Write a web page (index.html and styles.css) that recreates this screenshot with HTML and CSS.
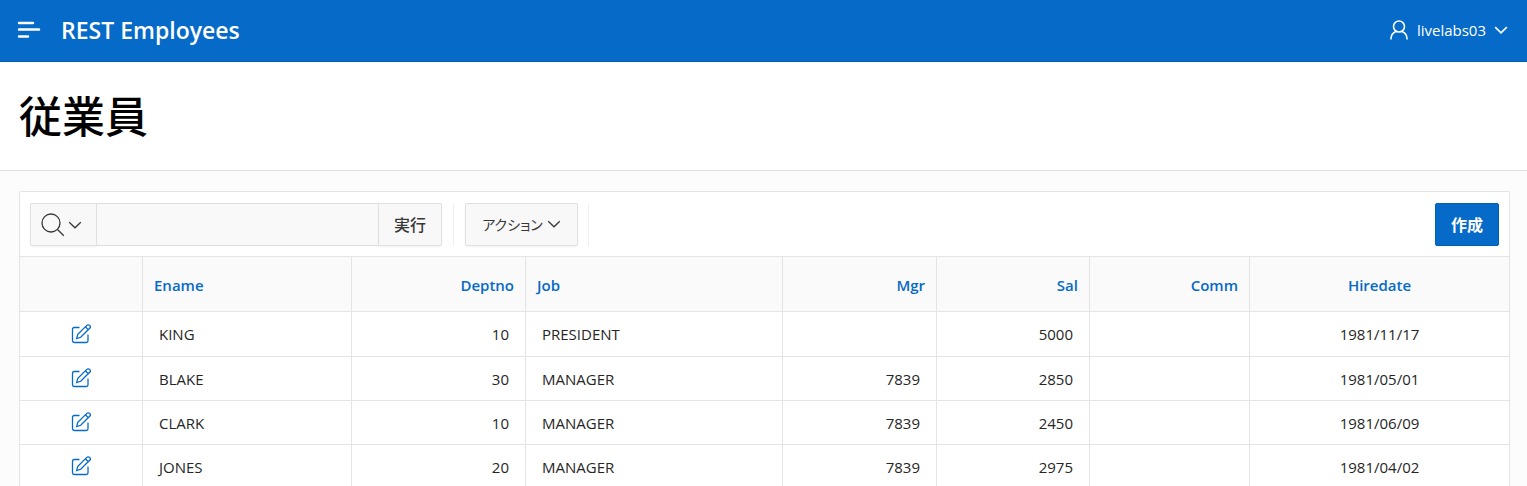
FILE: index.html
```html
<!DOCTYPE html>
<html lang="ja">
<head>
<meta charset="utf-8">
<meta name="viewport" content="width=device-width, initial-scale=1">
<title>従業員</title>
<link rel="stylesheet" href="styles.css">
</head>
<body>
<svg class="sprite" aria-hidden="true">
  <symbol id="chevron" viewBox="0 0 14 14"><path d="M1.2 4.2 7 9.800l5.800-5.600"/></symbol>
  <symbol id="edit" viewBox="0 0 20 20"><path d="M8.500 3.500H3.200A1.700 1.700 0 0 0 1.500 5.200v11.600a1.700 1.700 0 0 0 1.700 1.700h12.100a1.700 1.700 0 0 0 1.700-1.700v-6.300M5.600 14.600l1.200-4.200 9-9a1.900 1.900 0 0 1 2.900 2.900l-9 9-4.100 1.300ZM14.400 2.800l2.900 2.900"/></symbol>
</svg>
<header class="header">
  <button class="menu" type="button" aria-label="ナビゲーション">
    <svg viewBox="0 0 24 18"><path d="M2 2h14M2 8.500h20M2 15.500h9"/></svg>
  </button>
  <a class="brand" href="#">REST Employees</a>
  <button class="user" type="button">
    <svg class="person" viewBox="0 0 20 20"><circle cx="10" cy="6.500" r="5.500"/><path d="M1.900 19.500c0-4.300 2-6.900 5.400-8.200M18.100 19.500c0-4.300-2-6.900-5.400-8.200"/></svg>
    <span>livelabs03</span>
    <svg class="chevron"><use href="#chevron"/></svg>
  </button>
</header>
<div class="title"><h1>従業員</h1></div>
<main class="content">
  <section class="report">
    <div class="toolbar">
      <form class="search">
        <button class="button search-column" type="button" aria-label="検索する列の選択">
          <svg class="magnifier" viewBox="0 0 24 24"><circle cx="10" cy="10" r="9"/><path d="m16.500 16.500 6.300 6.300"/></svg>
          <svg class="chevron"><use href="#chevron"/></svg>
        </button>
        <input class="search-text" type="text" aria-label="検索">
        <button class="button go" type="button">実行</button>
      </form>
      <div class="actions">
        <button class="button action" type="button"><span>アクション</span><svg class="chevron"><use href="#chevron"/></svg></button>
      </div>
      <button class="button create" type="button">作成</button>
    </div>
    <table class="grid">
      <colgroup><col class="c-edit"><col class="c-ename"><col class="c-deptno"><col class="c-job"><col class="c-mgr"><col class="c-sal"><col class="c-comm"><col class="c-hire"></colgroup>
      <thead>
        <tr><th></th><th><a href="#">Ename</a></th><th class="num"><a href="#">Deptno</a></th><th><a href="#">Job</a></th><th class="num"><a href="#">Mgr</a></th><th class="num"><a href="#">Sal</a></th><th class="num"><a href="#">Comm</a></th><th class="mid"><a href="#">Hiredate</a></th></tr>
      </thead>
      <tbody>
        <tr><td class="mid"><a href="#" aria-label="KINGを編集"><svg class="edit"><use href="#edit"/></svg></a></td><td>KING</td><td class="num">10</td><td>PRESIDENT</td><td class="num"></td><td class="num">5000</td><td class="num"></td><td class="mid">1981/11/17</td></tr>
        <tr><td class="mid"><a href="#" aria-label="BLAKEを編集"><svg class="edit"><use href="#edit"/></svg></a></td><td>BLAKE</td><td class="num">30</td><td>MANAGER</td><td class="num">7839</td><td class="num">2850</td><td class="num"></td><td class="mid">1981/05/01</td></tr>
        <tr><td class="mid"><a href="#" aria-label="CLARKを編集"><svg class="edit"><use href="#edit"/></svg></a></td><td>CLARK</td><td class="num">10</td><td>MANAGER</td><td class="num">7839</td><td class="num">2450</td><td class="num"></td><td class="mid">1981/06/09</td></tr>
        <tr><td class="mid"><a href="#" aria-label="JONESを編集"><svg class="edit"><use href="#edit"/></svg></a></td><td>JONES</td><td class="num">20</td><td>MANAGER</td><td class="num">7839</td><td class="num">2975</td><td class="num"></td><td class="mid">1981/04/02</td></tr>
      </tbody>
    </table>
  </section>
</main>
</body>
</html>
```
FILE: styles.css
```css
* { box-sizing: border-box; }
html { scrollbar-width: none; }
body {
  margin: 0;
  background: #fcfcfc;
  color: #262626;
  font: 15px/20px "Open Sans", "Noto Sans CJK JP", sans-serif;
}
button, input { font: inherit; color: inherit; margin: 0; }
a { color: #056ac8; text-decoration: none; }
svg { display: block; flex: none; fill: none; stroke: currentColor; }
.sprite { display: none; }
.chevron { width: 14px; height: 14px; stroke-width: 1.3; }

.header {
  display: flex;
  align-items: center;
  height: 62px;
  padding: 0 19px 2px 17px;
  background: #056ac8;
  border-bottom: 1px solid #045fb4;
  color: #fff;
}
.menu, .user { border: 0; padding: 0; background: none; }
.menu svg { width: 24px; height: 18px; stroke-width: 2.5; stroke-linecap: round; }
.brand { margin-left: 20px; color: #fff; font-size: 23px; line-height: 32px; font-weight: 600; }
.user { display: flex; align-items: center; gap: 8px; margin-left: auto; }
.person { width: 20px; height: 20px; stroke-width: 1.6; }
.user .chevron { stroke-width: 1.6; }

.title {
  padding: 22px 19px 26px;
  background: #fff;
  border-bottom: 1px solid #e2e2e2;
}
.title h1 { margin: 0; color: #000; font-size: 43px; line-height: 60px; font-weight: 500; font-family: "Noto Sans CJK JP", sans-serif; }

.content { padding: 20px 17px 0 19px; }
.report { background: #fff; border: 1px solid #e4e4e4; border-bottom: 0; border-radius: 2px 2px 0 0; }
.toolbar { display: flex; align-items: center; padding: 11px 10px 10px; }
.button {
  display: flex;
  align-items: center;
  justify-content: center;
  height: 43px;
  padding: 0 8px 2px;
  border: 1px solid #e0e0e0;
  border-radius: 2px;
  background: #f8f8f8;
  color: #383838;
  font-family: "Noto Sans CJK JP", sans-serif;
  font-size: 16px;
  white-space: nowrap;
  box-shadow: 0 1px 2px rgba(0, 0, 0, .05);
}
.search { display: flex; }
.search-column { gap: 3px; width: 67px; padding: 0 4px 0 0; border-radius: 2px 0 0 2px; }
.magnifier { width: 24px; height: 24px; stroke-width: 1.3; }
.search-text { width: 281px; height: 43px; padding: 0 12px; border: 1px solid #dedede; border-width: 1px 0; background: #f9f9f9; border-radius: 0; }
.go { width: 64px; border-radius: 0 2px 2px 0; font-weight: 500; }
.actions { margin-left: 11px; padding: 0 10px 0 11px; border: 1px solid #f0f0f0; border-width: 0 1px; }
.action { gap: 4px; width: 113px; font-size: 14px; font-feature-settings: "palt"; }
.create { width: 64px; margin-left: auto; background: #056ac8; border-color: #045fb4; color: #fff; font-weight: 700; }

.grid { width: 100%; table-layout: fixed; border-collapse: separate; border-spacing: 0; }
.c-edit { width: 123px; }
.c-ename { width: 209px; }
.c-deptno { width: 174px; }
.c-job { width: 257px; }
.c-mgr { width: 154px; }
.c-sal { width: 153px; }
.c-comm { width: 160px; }
.c-hire { width: 259px; }
.grid th, .grid td { border: 1px solid #e4e4e4; border-width: 1px 1px 0 0; text-align: left; }
.grid th:last-child, .grid td:last-child { border-right: 0; }
.grid th { height: 55px; padding: 1px 11px 0; background: #fafafa; font-weight: 600; }
.grid td { height: 44px; padding: 0 16px; }
.grid tbody tr:first-child td { height: 45px; }
.grid .num { text-align: right; }
.grid .mid { text-align: center; }
.grid td.mid a { display: inline-block; vertical-align: middle; }
.grid td:first-child { padding: 0 17px 2px 16px; }
.edit { width: 20px; height: 20px; stroke-width: 1.3; }
```
